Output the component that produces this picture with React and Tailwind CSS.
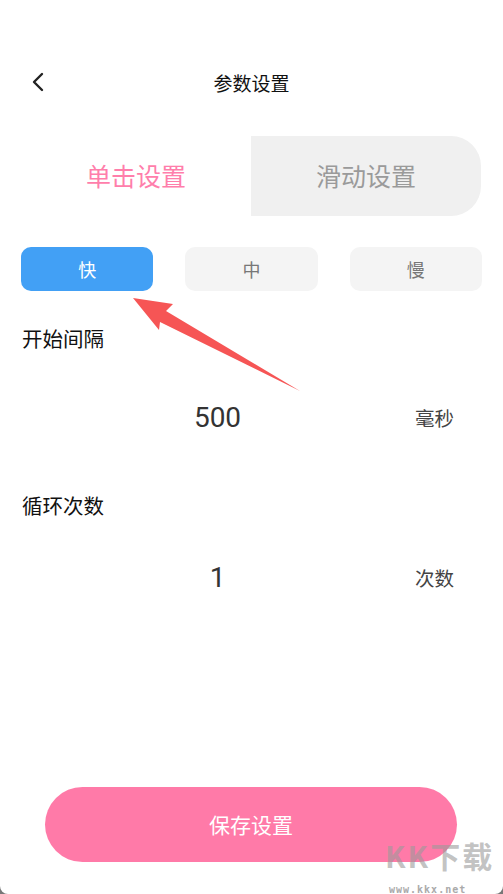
import React from 'react';

const font = { fontFamily: '"Noto Sans CJK SC", "Noto Sans", sans-serif' };

const speeds = ['快', '中', '慢'];

const App = () => {
  return (
    <div className="relative w-[503px] h-[894px] bg-[#777] overflow-hidden" style={font}>
      <div className="w-[503px] h-[894px] bg-white rounded-b-[8px]">
        {/* Header */}
        <div className="relative pt-[60px] h-[104px] flex items-end">
          <div className="relative w-full h-[44px] flex items-center justify-center">
            <svg className="absolute left-[31px] top-[12px]" width="16" height="20" viewBox="0 0 16 20">
              <path d="M11 2 L3 10 L11 18" fill="none" stroke="#222" strokeWidth="2.4" strokeLinecap="round" strokeLinejoin="round" />
            </svg>
            <span className="text-[19px] text-[#111] leading-none">参数设置</span>
          </div>
        </div>

        {/* Tabs */}
        <div className="mt-[32px] flex h-[80px]">
          <div className="w-[251px] pl-[21px] flex items-center justify-center text-[25px] text-[#ff7eab]">单击设置</div>
          <div className="w-[230px] bg-[#f0f0f0] rounded-r-[30px] flex items-center justify-center text-[25px] text-[#9a9a9a]">滑动设置</div>
        </div>

        {/* Speed */}
        <div className="mt-[31px] px-[21px] grid grid-cols-3 gap-[32px]">
          {speeds.map((s, i) => (
            <div
              key={s}
              className={`h-[44px] rounded-[10px] flex items-center justify-center text-[18px] ${
                i === 0 ? 'bg-[#42a0f5] text-white' : 'bg-[#f4f4f4] text-[#777]'
              }`}
            >
              {s}
            </div>
          ))}
        </div>

        {/* Start interval */}
        <div className="mt-[34px] pl-[22px] h-[26px] flex items-center text-[20.5px] text-[#111]">开始间隔</div>
        <div className="mt-[47px] h-[40px] flex items-center">
          <div className="w-[435px] text-center text-[28px] text-[#333]" style={{ fontFamily: 'Roboto, sans-serif' }}>500</div>
          <div className="text-[19.5px] text-[#444] -ml-[20px]">毫秒</div>
        </div>

        {/* Loop count */}
        <div className="mt-[54px] pl-[22px] h-[26px] flex items-center text-[20.5px] text-[#111]">循环次数</div>
        <div className="mt-[40px] h-[40px] flex items-center">
          <div className="w-[435px] text-center text-[28px] text-[#333]" style={{ fontFamily: 'Roboto, sans-serif' }}>1</div>
          <div className="text-[19.5px] text-[#444] -ml-[20px]">次数</div>
        </div>

        {/* Save */}
        <div className="mt-[189px] px-[45px] w-[502px]">
          <div className="h-[75px] rounded-full bg-[#ff7aa8] flex items-center justify-center text-[21px] text-white">保存设置</div>
        </div>
      </div>

      {/* Arrow annotation */}
      <svg className="absolute left-0 top-0 pointer-events-none" width="503" height="894">
        <polygon points="133,298 173,304 166,311 300,391 160,322 159,330" fill="#f65555" />
      </svg>

      {/* Watermark */}
      <div className="absolute left-[385px] top-[840px] pointer-events-none">
        <div className="text-[30px] font-bold text-[#9a9a9a]/60 leading-none tracking-[2px]">KK下载</div>
        <div className="text-[10px] text-[#aaa] font-bold mt-[12px] ml-[4px] tracking-[1px]" style={{ fontFamily: '"DejaVu Sans Mono", monospace' }}>www.kkx.net</div>
      </div>
    </div>
  );
};

export default App;
